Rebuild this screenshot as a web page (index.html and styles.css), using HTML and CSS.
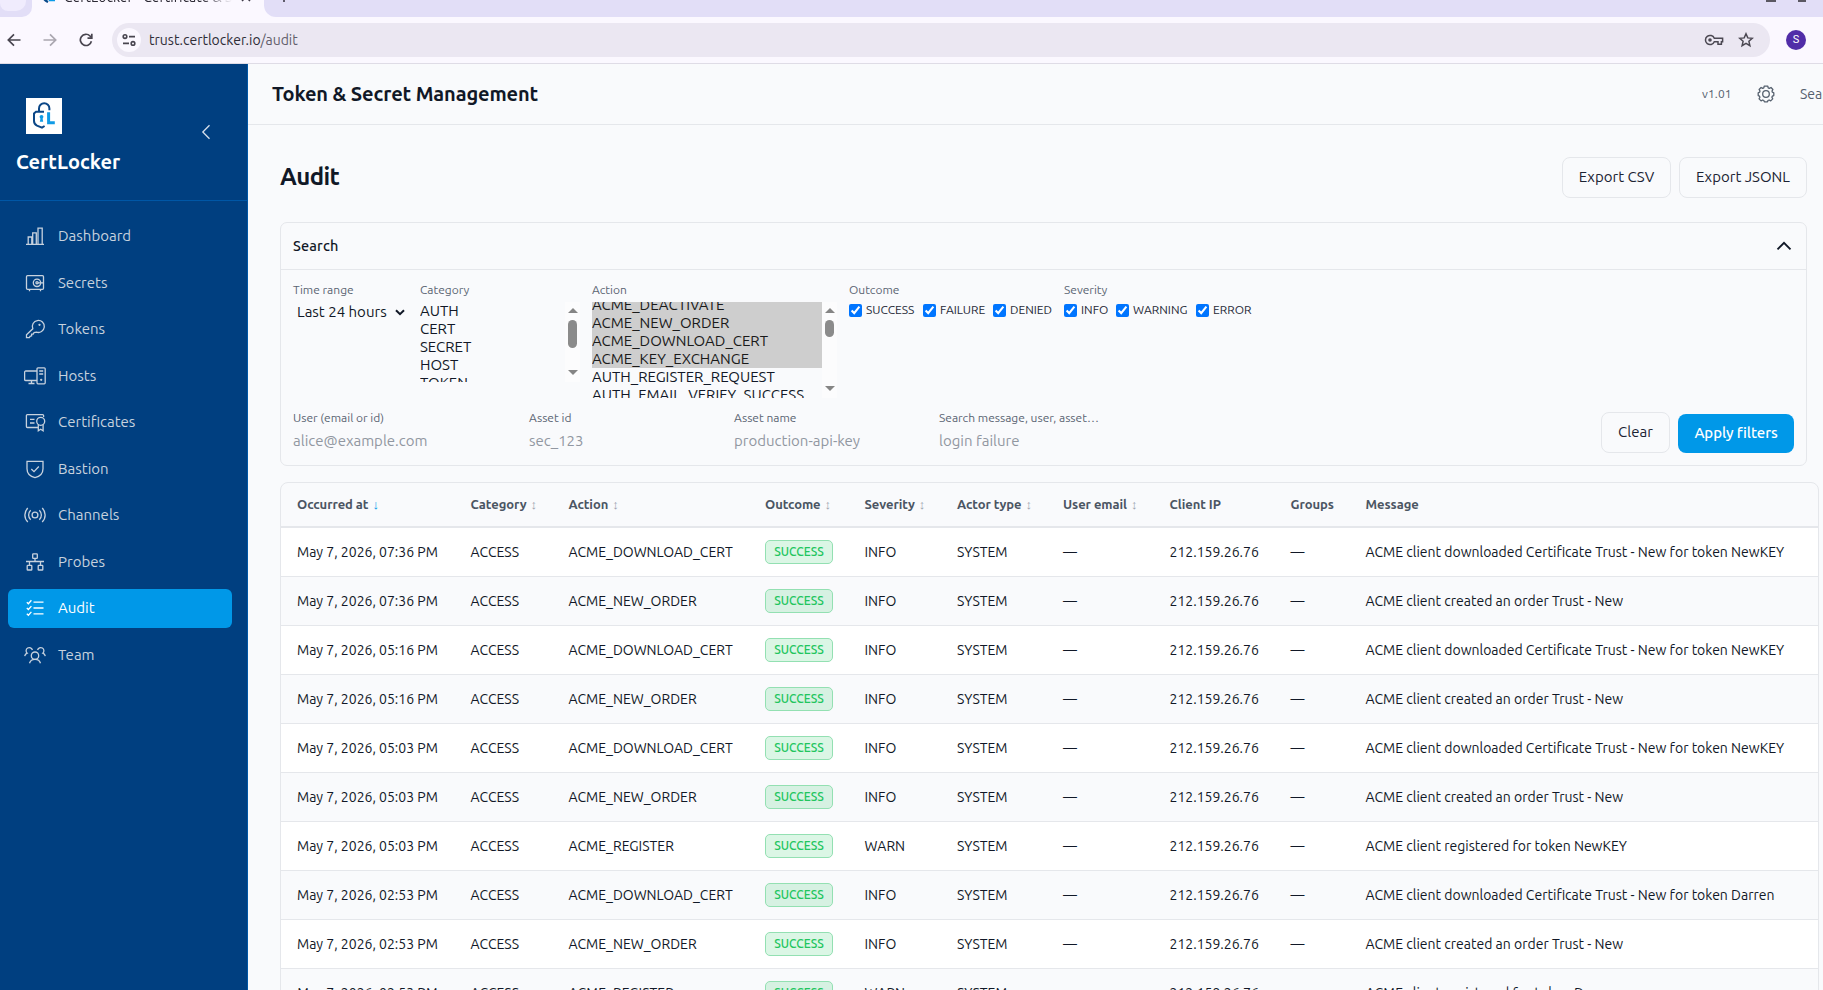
FILE: index.html
```html
<!DOCTYPE html>
<html lang="en">
<head>
<meta charset="utf-8">
<title>CertLocker - Certificate &amp; Secret Management</title>
<link rel="stylesheet" href="styles.css">
</head>
<body>
<div class="browser">
  <div class="tabstrip">
    <div class="tab-prev"><span></span></div>
    <div class="tab-active">
      <svg class="favicon" width="14" height="16" viewBox="0 0 14 16" fill="none" stroke-width="2.4"><path d="M6 4H2v7c0 2 2 3 4 4" stroke="#0a4a8a"/><path d="M8 5v8h5" stroke="#0a9be8"/></svg>
      <span class="tab-title">CertLocker - Certificate &amp; Secret</span>
      <svg width="10" height="10" viewBox="0 0 10 10" stroke="#3f3b48" stroke-width="1.5"><path d="M1 1l8 8M9 1L1 9"/></svg>
    </div>
    <div class="tab-rest">
      <svg width="12" height="12" viewBox="0 0 12 12" stroke="#3f3b48" stroke-width="1.6"><path d="M6 0v12M0 6h12"/></svg>
      <div class="win"><i></i><i></i></div>
    </div>
  </div>
  <div class="toolbar">
    <svg width="14" height="14" viewBox="0 0 14 14" fill="none" stroke="#48454f" stroke-width="1.7"><path d="M13.500 7H1.500M7 1.300L1.300 7 7 12.700"/></svg>
    <svg width="14" height="14" viewBox="0 0 14 14" fill="none" stroke="#aaa7b0" stroke-width="1.7"><path d="M.5 7h12M7 1.300L12.700 7 7 12.700"/></svg>
    <svg width="14" height="14" viewBox="0 0 14 14" fill="none" stroke="#48454f" stroke-width="1.7"><path d="M12.400 8.200A5.600 5.600 0 1 1 11 3l1.600 1.600"/><path d="M12.800.8v4.300H8.500"/></svg>
    <div class="omnibox">
      <span class="site-info"><svg width="14" height="14" viewBox="0 0 14 14" fill="none" stroke="#48454f" stroke-width="1.6"><circle cx="3" cy="3.6" r="1.8"/><path d="M7 3.600h6M1 10.400h6"/><circle cx="11" cy="10.4" r="1.8"/></svg></span>
      <span class="url">trust.certlocker.io<em>/audit</em></span>
      <svg class="key" width="20" height="12" viewBox="0 0 20 12" fill="none" stroke="#4b4852" stroke-width="1.5"><path d="M10.300 4.200A4.600 4.600 0 1 0 10.300 7.800H14v2.400h3.400V7.800h1.200V4.200z"/><circle cx="6" cy="6" r="1.8" fill="#4b4852" stroke="none"/></svg>
      <svg width="16" height="16" viewBox="0 0 16 16" fill="none" stroke="#4b4852" stroke-width="1.5"><path d="M8 1.800l1.800 4.100 4.500.4-3.400 3 1 4.400L8 11.400l-3.900 2.300 1-4.400-3.400-3 4.500-.4z"/></svg>
    </div>
    <span class="avatar">S</span>
  </div>
</div>

<div class="app">
  <aside class="sidebar">
    <div class="brand">
      <div class="brand-main">
        <div class="logo">
          <svg width="36" height="36" viewBox="0 0 36 36" fill="none"><path d="M13 13.500V10.500a5.200 5.200 0 0 1 10.400 0v1.700" stroke="#0b4787" stroke-width="2"/><path d="M18 13.800H10L8 15.500v7.500c0 2.200 1.200 3.600 3 4.600l5 2 2.600-1.600" stroke="#0b4787" stroke-width="2"/><circle cx="15.500" cy="18.800" r="1.900" fill="#109be6"/><path d="M14.700 19.500h1.700l.8 4.200h-3.400z" fill="#109be6"/><path d="M22.600 14.300v10.400h6.200" stroke="#109be6" stroke-width="3"/></svg>
        </div>
        <div class="brand-name">CertLocker</div>
      </div>
      <svg class="collapse" width="10" height="16" viewBox="0 0 10 16" fill="none" stroke="#d7e1ec" stroke-width="1.3"><path d="M8.500 1.200L1.800 8l6.700 6.800"/></svg>
    </div>
    <nav class="nav">
      <a class="nav-item"><svg class="ico" viewBox="0 0 22 20"><path d="M2 18.300h18M4.200 18v-7h3.600v7M8.700 18V6.800h3.600V18M14 18V2.200h4.200V18"/></svg>Dashboard</a>
      <a class="nav-item"><svg class="ico" viewBox="0 0 22 20"><rect x="2.500" y="2.700" width="17" height="13.600" rx="1"/><circle cx="13" cy="9.800" r="3.700"/><circle cx="13" cy="9.800" r="1.100"/><path d="M14 9.800h5.500M5.500 16.300v2M16.500 16.300v2"/></svg>Secrets</a>
      <a class="nav-item"><svg class="ico" viewBox="0 0 22 20"><path d="M8.800 9.800A6 6 0 1 1 12.300 13.100l-2.200.4-.9 1.600H7.600v1.700l-1.500.5-.8 1.300H2.500v-2.800z"/><circle cx="15.500" cy="5.800" r=".5"/></svg>Tokens</a>
      <a class="nav-item"><svg class="ico" viewBox="0 0 22 20"><path d="M13 5H1.800c-.7 0-1.200.5-1.200 1.200v7.200c0 .6.500 1.100 1.200 1.100H13M7.500 14.500v3M4.500 17.500h6"/><rect x="13" y="1.800" width="8.200" height="16" rx="1"/><path d="M15.200 5h4M15.200 8h4"/><circle cx="17.200" cy="13.800" r=".5"/></svg>Hosts</a>
      <a class="nav-item"><svg class="ico" viewBox="0 0 22 20"><path d="M14 15.500H3.400c-.6 0-1-.4-1-1V3.600c0-.6.4-1 1-1h15.200c.6 0 1 .4 1 1V5M6 7.300h4.500M6 11h4.500"/><circle cx="16.700" cy="9.300" r="4"/><path d="M14.300 12.500v6.300l2.400-1.500 2.400 1.500v-6.300"/></svg>Certificates</a>
      <a class="nav-item"><svg class="ico" viewBox="0 0 22 20"><path d="M3 2.300h16v7.400c0 4.500-3.500 7.800-8 9-4.500-1.200-8-4.500-8-9z"/><path d="M7.300 10l2.700 2.600 4.800-5.100"/></svg>Bastion</a>
      <a class="nav-item"><svg class="ico" viewBox="0 0 22 20"><circle cx="11" cy="10" r="2.900"/><path d="M6.700 5.200a6.600 6.600 0 0 0 0 9.600M15.300 5.200a6.600 6.600 0 0 1 0 9.600M3.800 3a9.800 9.800 0 0 0 0 14M18.200 3a9.800 9.800 0 0 1 0 14"/></svg>Channels</a>
      <a class="nav-item"><svg class="ico" viewBox="0 0 22 20"><rect x="8.700" y="1.800" width="4.600" height="4.600" rx=".6"/><rect x="3.200" y="13.400" width="4.600" height="4.600" rx=".6"/><rect x="14.200" y="13.400" width="4.600" height="4.600" rx=".6"/><path d="M11 6.400v3M2 9.500h18M5.500 9.500v3.900M16.500 9.500v3.900"/></svg>Probes</a>
      <a class="nav-item active"><svg class="ico" viewBox="0 0 22 20"><path d="M9.500 4.200h10M9.500 10h10M9.500 15.800h10M2.800 4.200l1.600 1.500 3-3.400M2.800 10l1.600 1.500 3-3.400M2.800 15.800l1.600 1.500 3-3.400"/></svg>Audit</a>
      <a class="nav-item"><svg class="ico" viewBox="0 0 22 20"><circle cx="11" cy="10.700" r="3.700"/><path d="M5.500 18.200c.7-2.400 2.200-3.900 5.500-3.900s4.800 1.500 5.500 3.900M.7 11.200c.3-1.600 1-2.500 2.500-3A3.200 3.200 0 1 1 8.400 5M21.300 11.200c-.3-1.600-1-2.500-2.500-3A3.200 3.200 0 1 0 13.600 5"/></svg>Team</a>
    </nav>
  </aside>

  <main class="main">
    <header class="topbar">
      <h2>Token &amp; Secret Management</h2>
      <span class="version">v1.01</span>
      <svg class="gear" width="18" height="18" viewBox="0 0 18 18" fill="none" stroke="#55606e" stroke-width="1.3"><circle cx="9" cy="9" r="3.300"/><path d="M7.200 1.200h3.600l.4 1.700 1.100.5 1.700-.9 1.900 2-.9 1.600.4 1.100 1.400.6v2.800l-1.500.6-.4 1.100.8 1.600-2 2-1.600-.9-1.100.5-.5 1.300H7.400l-.6-1.300-1.100-.5-1.600.9-2-2 .8-1.600-.4-1.100L1.200 10.600V7.800l1.400-.6.4-1.100-.9-1.600 2-2 1.600.9 1.100-.5z" stroke-linejoin="round"/></svg>
      <span class="search-link">Search</span>
    </header>

    <section class="page">
      <div class="page-head">
        <h1>Audit</h1>
        <button class="btn w-csv">Export CSV</button>
        <button class="btn w-json">Export JSONL</button>
      </div>

      <div class="card">
        <div class="card-head"><span>Search</span>
          <svg width="16" height="10" viewBox="0 0 16 10" fill="none" stroke="#111827" stroke-width="1.900"><path d="M1.500 8.300L8 1.800l6.500 6.500"/></svg>
        </div>
        <div class="filters">
          <div class="field f-time"><label>Time range</label>
            <div class="select">Last 24 hours<svg width="10" height="7" viewBox="0 0 10 7" fill="none" stroke="#111827" stroke-width="2"><path d="M1 1.200l4 4 4-4"/></svg></div>
          </div>
          <div class="field f-cat"><label>Category</label>
            <div class="listbox lb-cat">
              <div class="options"><p>AUTH</p><p>CERT</p><p>SECRET</p><p>HOST</p><p>TOKEN</p></div>
              <div class="bar"><b class="up"></b><i></i><b class="down"></b></div>
            </div>
          </div>
          <div class="field f-act"><label>Action</label>
            <div class="listbox lb-act">
              <div class="options"><p class="sel">ACME_DEACTIVATE</p><p class="sel">ACME_NEW_ORDER</p><p class="sel">ACME_DOWNLOAD_CERT</p><p class="sel">ACME_KEY_EXCHANGE</p><p>AUTH_REGISTER_REQUEST</p><p>AUTH_EMAIL_VERIFY_SUCCESS</p></div>
              <div class="bar"><b class="up"></b><i></i><b class="down"></b></div>
            </div>
          </div>
          <div class="field f-out"><label>Outcome</label>
            <div class="checks"><span class="c1"><input type="checkbox" checked>SUCCESS</span><span class="c2"><input type="checkbox" checked>FAILURE</span><span><input type="checkbox" checked>DENIED</span></div>
          </div>
          <div class="field"><label>Severity</label>
            <div class="checks"><span class="c3"><input type="checkbox" checked>INFO</span><span class="c4"><input type="checkbox" checked>WARNING</span><span><input type="checkbox" checked>ERROR</span></div>
          </div>
        </div>
        <div class="filters second">
          <div class="field t-user"><label>User (email or id)</label><div class="ph">alice@example.com</div></div>
          <div class="field t-asset"><label>Asset id</label><div class="ph">sec_123</div></div>
          <div class="field t-asset"><label>Asset name</label><div class="ph">production-api-key</div></div>
          <div class="field t-msg"><label>Search message, user, asset…</label><div class="ph">login failure</div></div>
          <div class="actions"><button class="btn clear">Clear</button><button class="btn primary">Apply filters</button></div>
        </div>
      </div>

      <div class="table-wrap">
        <table>
          <colgroup><col class="k1"><col class="k2"><col class="k3"><col class="k4"><col class="k5"><col class="k6"><col class="k7"><col class="k8"><col class="k9"><col></colgroup>
          <thead><tr>
            <th>Occurred at<s class="on">↓</s></th><th>Category<s>↕</s></th><th>Action<s>↕</s></th><th>Outcome<s>↕</s></th><th>Severity<s>↕</s></th><th>Actor type<s>↕</s></th><th>User email<s>↕</s></th><th>Client IP</th><th>Groups</th><th>Message</th>
          </tr></thead>
          <tbody id="rows"></tbody>
        </table>
      </div>
    </section>
  </main>
</div>
<script src="app.js"></script>
</body>
</html>
```
FILE: styles.css
```css
* { box-sizing: border-box; }
body { margin: 0; width: 1823px; height: 990px; overflow: hidden; display: flex; flex-direction: column; font-family: Ubuntu, "Noto Sans", sans-serif; font-size: 14px; color: #111827; background: #f9fafc; }
svg { display: block; flex: none; }
h1, h2, p { margin: 0; }

/* browser chrome */
.browser { height: 64px; flex: none; border-bottom: 1px solid #dfdce6; background: #fbf8ff; }
.tabstrip { height: 17px; display: flex; overflow: hidden; }
.tab-prev { width: 32px; height: 17px; background: #e2def7; border-bottom-right-radius: 10px; }
.tab-prev span { display: block; width: 26px; height: 11px; background: #f0ecfd; border-radius: 0 0 10px 8px; }
.tab-active { width: 232px; height: 17px; display: flex; padding-left: 10px; }
.favicon { margin-top: -13px; }
.tab-title { width: 168px; margin: -13px 9px 0 8px; font-size: 14px; line-height: 20px; height: 20px; white-space: nowrap; overflow: hidden; color: #2b2833; mask-image: linear-gradient(90deg, #000 82%, transparent); }
.tab-active svg:last-child { margin-top: -8px; }
.tab-rest { flex: 1; height: 17px; display: flex; justify-content: space-between; background: #e2def7; border-bottom-left-radius: 12px; padding-left: 14px; }
.tab-rest svg { margin: -10px 0 0 0; }
.win { display: flex; gap: 22px; padding-right: 17px; }
.win i { width: 10px; height: 2px; background: #5b5862; }
.win i:last-child { width: 8px; }
.toolbar { height: 46px; display: flex; align-items: center; padding-left: 7px; }
.toolbar > svg { margin-right: 22px; }
.omnibox { width: 1658px; height: 34px; margin-left: -3px; border-radius: 17px; background: #ebe7f2; display: flex; align-items: center; padding: 0 16px 0 5px; }
.site-info { width: 24px; height: 24px; border-radius: 50%; background: #fbf8ff; display: flex; align-items: center; justify-content: center; }
.url { flex: 1; margin-left: 8px; font-size: 14px; color: #2f2c36; }
.url em { font-style: normal; color: #625e6b; }
.key { margin-right: 14px; }
.avatar { width: 20px; height: 20px; margin-left: 16px; border-radius: 50%; background: #512da8; color: #fff; font: 11px/20px Roboto, sans-serif; text-align: center; }

/* sidebar */
.app { flex: 1; display: flex; min-height: 0; }
.sidebar { width: 248px; flex: none; background: #003f80; border-right: 1px solid #0057a6; }
.brand { height: 137px; border-bottom: 1px solid #0057a6; display: flex; padding: 34px 36.500px 0 16px; justify-content: space-between; }
.logo { width: 36px; height: 36px; margin-left: 10px; background: #fff; }
.brand-name { margin-top: 14px; font-size: 20px; line-height: 28px; font-weight: 600; color: #fff; }
.collapse { margin-top: 26px; }
.nav { padding: 15.500px 15px 0 8px; display: flex; flex-direction: column; gap: 7.560px; }
.nav-item { height: 39px; display: flex; align-items: center; padding-left: 16px; gap: 12px; border-radius: 6px; color: #c7d2de; font-size: 15px; line-height: 20px; }
.nav-item.active { background: #0098e8; color: #fff; }
.ico { width: 22px; height: 20px; fill: none; stroke: currentColor; stroke-width: 1.300; }

/* top bar */
.main { flex: 1; min-width: 0; overflow: hidden; }
.topbar { height: 61px; border-bottom: 1px solid #e5e7eb; display: flex; align-items: center; padding: 0 0 2px 24px; color: #55606e; white-space: nowrap; }
.topbar h2 { width: 1430px; flex: none; font-size: 20px; font-weight: 600; letter-spacing: -.12px; color: #111827; }
.version { width: 55px; flex: none; font-size: 12px; padding-top: 1px; letter-spacing: .1px; }
.gear { margin: 2px 25px 0 0; }
.search-link { font-size: 14px; padding-top: 1px; }

/* page */
.page { padding: 32px 16px 0 32px; }
.page-head { height: 41px; display: flex; align-items: center; gap: 8px; }
.page-head h1 { flex: 1; font-size: 24px; font-weight: 600; letter-spacing: -.6px; line-height: 32px; padding-bottom: 2px; }
.btn { height: 41px; padding: 0 0 2px; border: 1px solid #e5e7eb; border-radius: 8px; background: #f9fafc; color: #1b2333; font-family: inherit; font-size: 15px; line-height: 20px; text-align: center; }
.w-csv { width: 109px; }
.w-json { width: 128px; }
.card { height: 244px; margin-top: 24px; border: 1px solid #e5e7eb; border-radius: 7px; }
.card-head { height: 47px; border-bottom: 1px solid #e5e7eb; display: flex; align-items: center; justify-content: space-between; padding: 0 14px 0 12px; font-size: 14.500px; letter-spacing: .15px; font-weight: 500; }
.card-head span { padding-bottom: 2px; }
.filters { height: 133px; padding: 12px 12px 0; display: flex; }
.field label { display: block; height: 16px; font-size: 12px; line-height: 15px; color: #5b6573; white-space: nowrap; }
.f-time { width: 127px; }
.f-cat { width: 172px; }
.f-act { width: 257px; }
.f-out { width: 215px; }
.select { display: flex; align-items: center; gap: 8px; padding: 5px 0 0 4px; font-size: 15px; line-height: 18px; }
.listbox { display: flex; margin-top: 4px; overflow: hidden; }
.lb-cat { width: 160px; height: 80px; }
.lb-act { width: 245px; height: 96px; }
.options { flex: 1; font-size: 15px; }
.options p { height: 18px; line-height: 18px; white-space: nowrap; }
.lb-act .options { margin-top: -6px; }
.sel { background: #cecece; color: #1a1a1a; }
.bar { width: 15px; background: #fcfcfd; display: flex; flex-direction: column; align-items: center; padding: 6px 0 7px; }
.bar i { width: 9px; height: 28px; margin-top: 7px; border-radius: 5px; background: #8b8b8b; }
.lb-act .bar i { height: 17px; }
.up, .down { border: 5px solid transparent; border-top: 0; border-bottom: 5px solid #858585; }
.down { margin-top: auto; border-bottom: 0; border-top: 5px solid #858585; }
.checks { display: flex; padding-top: 3px; font-size: 12px; line-height: 17px; color: #1f2937; }
.checks span { display: flex; align-items: center; height: 17px; white-space: nowrap; }
.checks input { width: 13px; height: 13px; margin: 2px 4px 0 0; }
.c1 { width: 74px; }
.c2 { width: 70px; }
.c3 { width: 52px; }
.c4 { width: 80px; }
.second { height: 63px; padding-top: 7px; }
.t-user { width: 236px; }
.t-asset { width: 205px; }
.t-msg { flex: 1; }
.ph { margin-top: 5px; font-size: 15px; line-height: 20px; color: #9197a1; }
.actions { display: flex; align-items: flex-end; gap: 8px; height: 41px; margin-top: 2px; }
.clear { width: 69px; }
.primary { width: 116px; height: 39px; border: 0; background: #0098e8; color: #fff; font-weight: 500; letter-spacing: -.1px; }

/* table */
.table-wrap { width: 1539px; margin-top: 16px; border: 1px solid #e5e7eb; border-radius: 8px; overflow: hidden; }
table { width: 1537px; table-layout: fixed; border-collapse: separate; border-spacing: 0; }
.k1 { width: 173.500px; } .k2 { width: 98px; } .k3 { width: 196.500px; } .k4 { width: 99.500px; } .k5 { width: 92.500px; }
.k6 { width: 106px; } .k7 { width: 106.500px; } .k8 { width: 121px; } .k9 { width: 75px; }
th, td { padding: 0 0 0 16px; text-align: left; white-space: nowrap; }
th { height: 45px; padding-bottom: 1px; border-bottom: 2px solid #e5e7eb; font-size: 13px; line-height: 16px; font-weight: 600; letter-spacing: -.05px; color: #4b5563; }
th s { margin-left: 4px; text-decoration: none; font-weight: 400; font-size: 13px; line-height: 0; color: #9ca3af; }
th s.on { color: #0098e8; }
td { height: 49px; border-bottom: 1px solid #e5e7eb; font-size: 14px; background: #fff; }
tr:nth-child(even) td { background: #f9fafc; }
.badge { display: inline-block; width: 68px; height: 24px; border: 1px solid #93e0b2; border-radius: 5px; background: rgba(34, 197, 94, .16); color: #22c55e; font-size: 12px; font-weight: 500; line-height: 22px; text-align: center; vertical-align: middle; }
```
FILE: app.js
```js
const dl = 'ACME_DOWNLOAD_CERT', order = 'ACME_NEW_ORDER', reg = 'ACME_REGISTER';
const created = 'ACME client created an order Trust - New';
const downloaded = 'ACME client downloaded Certificate Trust - New for token ';
const events = [
  ['07:36', dl, 'INFO', downloaded + 'NewKEY'],
  ['07:36', order, 'INFO', created],
  ['05:16', dl, 'INFO', downloaded + 'NewKEY'],
  ['05:16', order, 'INFO', created],
  ['05:03', dl, 'INFO', downloaded + 'NewKEY'],
  ['05:03', order, 'INFO', created],
  ['05:03', reg, 'WARN', 'ACME client registered for token NewKEY'],
  ['02:53', dl, 'INFO', downloaded + 'Darren'],
  ['02:53', order, 'INFO', created],
  ['02:53', reg, 'WARN', 'ACME client registered for token Darren']
];
document.getElementById('rows').innerHTML = events.map(([time, action, severity, message]) =>
  `<tr><td>May 7, 2026, ${time} PM</td><td>ACCESS</td><td>${action}</td><td><span class="badge">SUCCESS</span></td><td>${severity}</td><td>SYSTEM</td><td>—</td><td>212.159.26.76</td><td>—</td><td>${message}</td></tr>`
).join('');
```
